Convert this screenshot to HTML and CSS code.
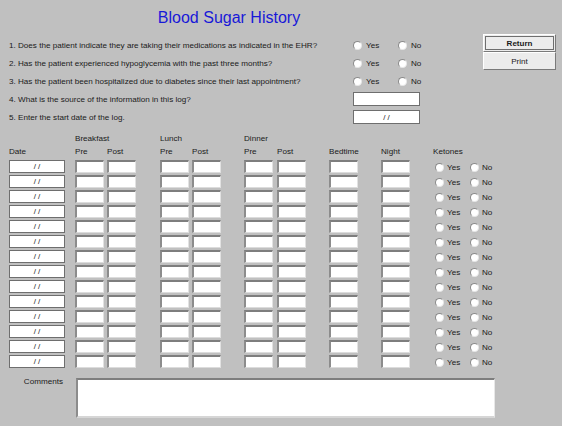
FILE: index.html
```html
<!DOCTYPE html>
<html lang="en">
<head>
    <meta charset="UTF-8">
    <meta name="viewport" content="width=device-width, initial-scale=1.0">
    <title>Blood Sugar History</title>
    <link rel="stylesheet" href="styles.css">
</head>
<body>
    <div class="top">
        <div class="intro">
            <h1 class="title">Blood Sugar History</h1>

            <div class="question">
                <span class="q-text">1. Does the patient indicate they are taking their medications as indicated in the EHR?</span>
                <label class="choice"><input type="radio" name="q1">Yes</label>
                <label class="choice"><input type="radio" name="q1">No</label>
            </div>
            <div class="question">
                <span class="q-text">2. Has the patient experienced hypoglycemia with the past three months?</span>
                <label class="choice"><input type="radio" name="q2">Yes</label>
                <label class="choice"><input type="radio" name="q2">No</label>
            </div>
            <div class="question">
                <span class="q-text">3. Has the patient been hospitalized due to diabetes since their last appointment?</span>
                <label class="choice"><input type="radio" name="q3">Yes</label>
                <label class="choice"><input type="radio" name="q3">No</label>
            </div>
            <div class="question">
                <span class="q-text">4. What is the source of the information in this log?</span>
                <input class="flat wide" type="text">
            </div>
            <div class="question">
                <span class="q-text">5. Enter the start date of the log.</span>
                <input class="flat wide" type="text" value="/ /">
            </div>
        </div>

        <div class="actions">
            <button class="btn default">Return</button>
            <button class="btn">Print</button>
        </div>
    </div>

    <div class="log" id="log">
        <div></div>
        <div class="span2">Breakfast</div>
        <div class="span2">Lunch</div>
        <div class="span2">Dinner</div>
        <div class="span3"></div>

        <div class="head">Date</div>
        <div class="head">Pre</div>
        <div class="head">Post</div>
        <div class="head">Pre</div>
        <div class="head">Post</div>
        <div class="head">Pre</div>
        <div class="head">Post</div>
        <div class="head">Bedtime</div>
        <div class="head">Night</div>
        <div class="head">Ketones</div>
    </div>

    <div class="comments">
        <label class="comments-label" for="comments">Comments</label>
        <textarea id="comments"></textarea>
    </div>

    <script>
        const log = document.getElementById("log");
        for (let i = 0; i < 14; i++) {
            const date = document.createElement("div");
            date.innerHTML = '<input class="flat date" type="text" value="/ /">';
            log.appendChild(date);

            for (let j = 0; j < 8; j++) {
                const cell = document.createElement("div");
                cell.innerHTML = '<input class="reading" type="text">';
                log.appendChild(cell);
            }

            const ketones = document.createElement("div");
            ketones.className = "ketones";
            ketones.innerHTML =
                '<label class="choice"><input type="radio" name="k' + i + '">Yes</label>' +
                '<label class="choice"><input type="radio" name="k' + i + '">No</label>';
            log.appendChild(ketones);
        }
    </script>
</body>
</html>
```

FILE: styles.css
```css
body {
    background-color: #c0c0c0;
    color: #1a1a1a;
    font-family: "Liberation Sans", Arial, sans-serif;
    font-size: 8.1px;
    margin: 0;
    padding: 0 0 0 9px;
}
.top {
    display: flex;
}
.intro {
    width: 440px;
}
.title {
    margin: 0;
    padding-top: 8px;
    height: 36px;
    box-sizing: border-box;
    line-height: 20px;
    font-size: 16px;
    font-weight: normal;
    text-align: center;
    color: #1818d8;
}
.question {
    display: flex;
    align-items: center;
    height: 18px;
}
.q-text {
    width: 344px;
    flex-shrink: 0;
}
.choice {
    display: flex;
    align-items: center;
    width: 45px;
}
input[type="radio"] {
    appearance: none;
    -webkit-appearance: none;
    width: 9px;
    height: 9px;
    margin: 0 4px 0 0;
    border: 1px solid;
    border-color: #8a8a8a #e6e6e6 #e6e6e6 #8a8a8a;
    border-radius: 50%;
    background-color: #ffffff;
    box-sizing: border-box;
}
input {
    font-family: inherit;
    font-size: 8px;
    box-sizing: border-box;
    margin: 0;
    padding: 0;
    background-color: #ffffff;
    color: #1a1a1a;
    outline: none;
}
input.flat {
    border: 1px solid #6e6e6e;
    text-align: center;
    height: 14px;
}
input.wide {
    width: 67px;
}
input.date {
    width: 56px;
    height: 13px;
}
input.reading {
    width: 29px;
    height: 13px;
    border-top: 2px solid #7e7e7e;
    border-left: 2px solid #8c8c8c;
    border-right: 1px solid #e2e2e2;
    border-bottom: 1px solid #dcdcdc;
}
.actions {
    display: flex;
    flex-direction: column;
    margin: 34px 0 0 34px;
    width: 73px;
}
.btn {
    height: 18px;
    padding: 0;
    font-family: inherit;
    font-size: 8px;
    color: #1a1a1a;
    background-color: #ececec;
    border: 1px solid;
    border-color: #ffffff #7a7a7a #7a7a7a #ffffff;
}
.btn.default {
    font-weight: bold;
    box-shadow: inset 0 0 0 1px #ececec, inset 0 0 0 2px #6e6e6e;
}
.log {
    display: grid;
    grid-template-columns: 66px 32px 53px 32px 52px 33px 52px 52px 52px 1fr;
    grid-template-rows: 13px 14px repeat(14, 15px);
    margin-top: 7px;
    line-height: 12px;
}
.span2 {
    grid-column: span 2;
}
.span3 {
    grid-column: span 3;
}
.ketones {
    display: flex;
    align-items: center;
    height: 15px;
    padding-left: 2px;
}
.ketones .choice {
    width: 35px;
}
.ketones input[type="radio"] {
    margin-right: 3px;
}
.comments {
    display: flex;
    margin-top: 8px;
}
.comments-label {
    width: 66px;
    padding-right: 12px;
    box-sizing: border-box;
    text-align: right;
    line-height: 8px;
}
textarea {
    width: 419px;
    height: 40px;
    margin: 0 0 0 1px;
    padding: 0;
    box-sizing: border-box;
    resize: none;
    background-color: #ffffff;
    border-top: 2px solid #7e7e7e;
    border-left: 2px solid #8c8c8c;
    border-right: 1px solid #e8e8e8;
    border-bottom: 2px solid #d6d6d6;
    outline: none;
}
```
